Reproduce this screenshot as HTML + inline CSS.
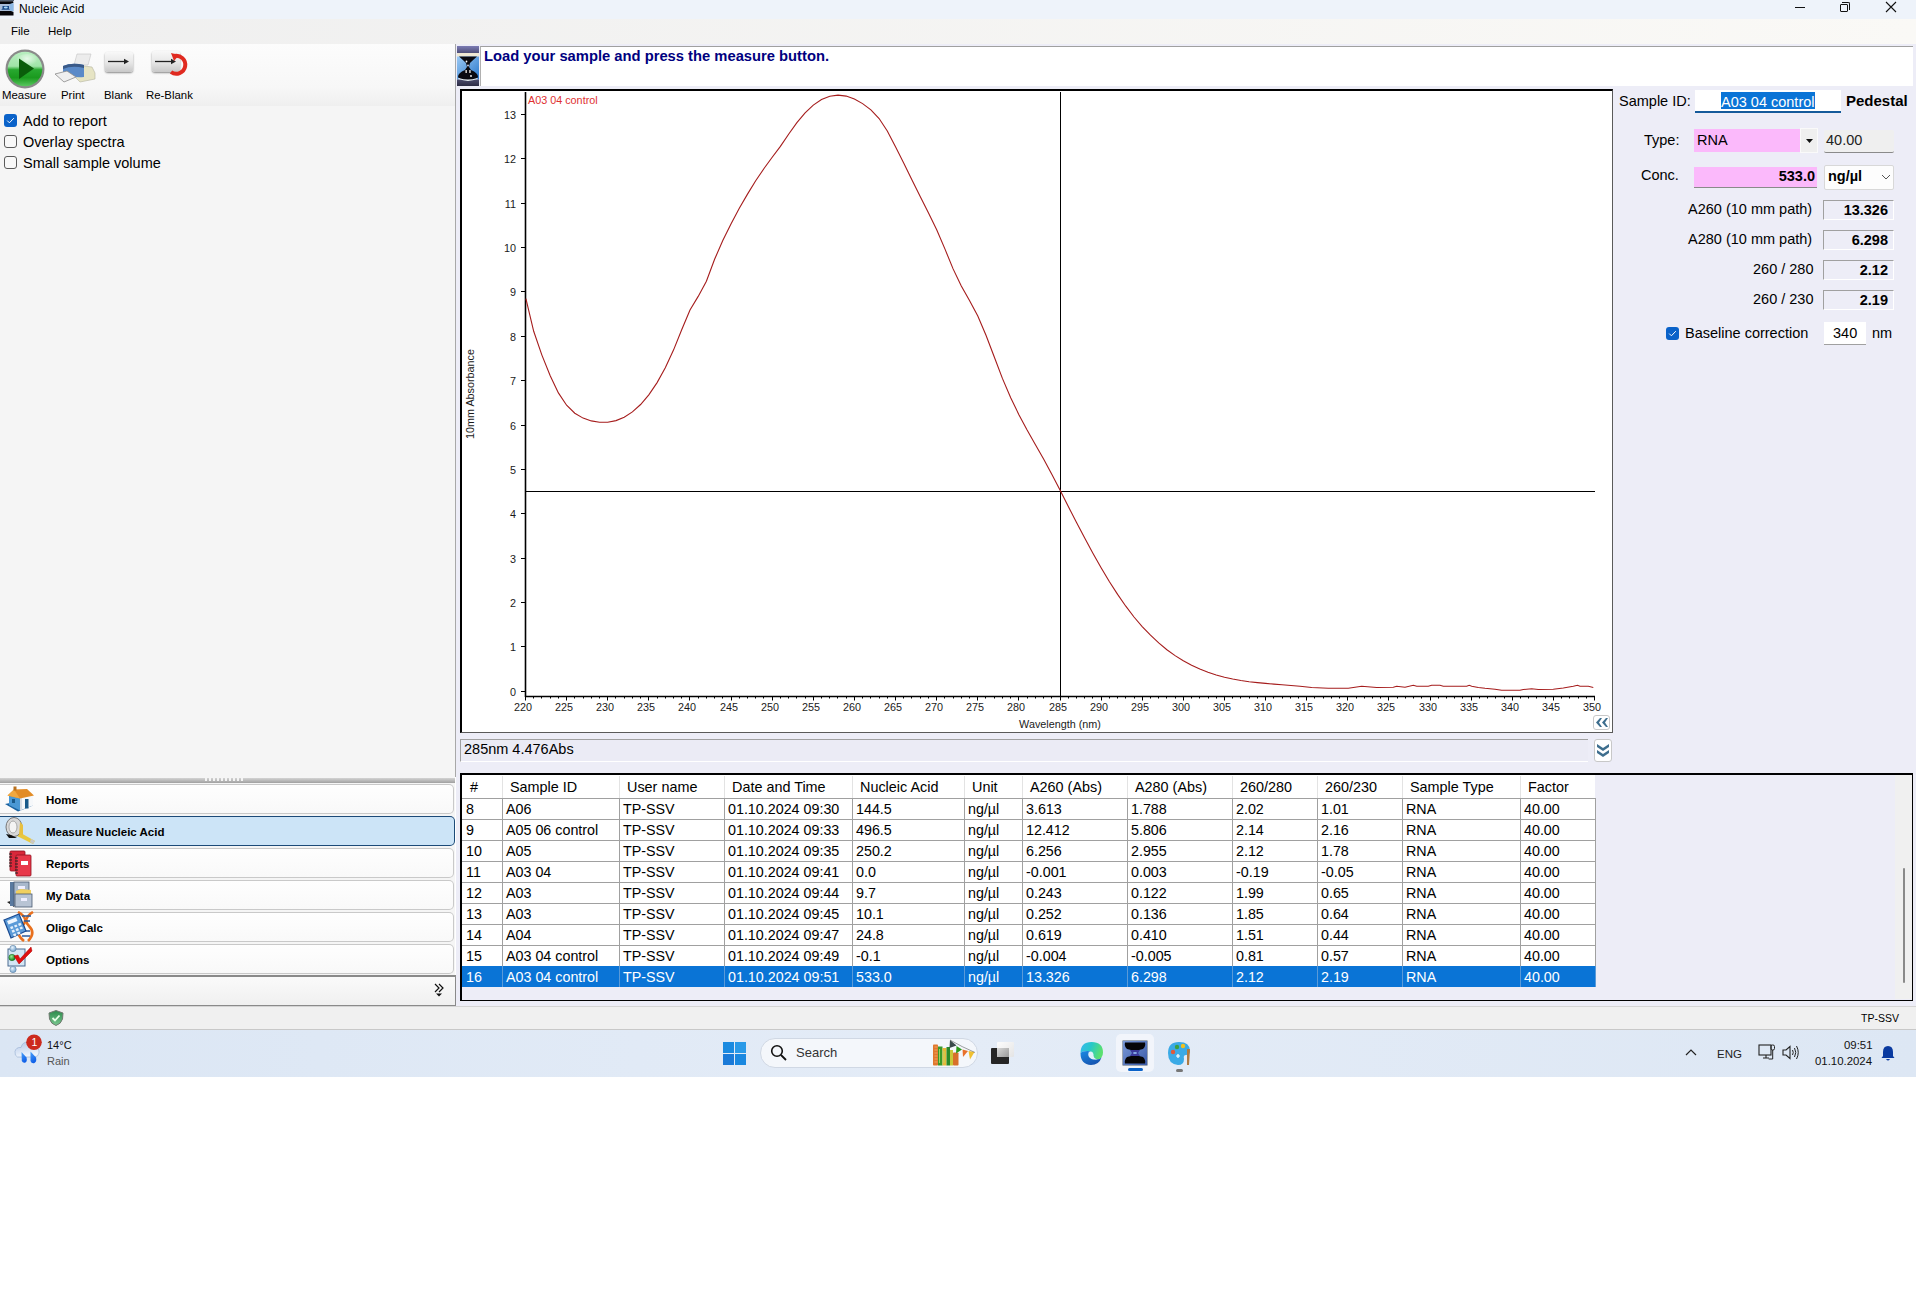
<!DOCTYPE html>
<html><head><meta charset="utf-8"><title>Nucleic Acid</title>
<style>
html,body{margin:0;padding:0;background:#fff;}
body{width:1920px;height:1312px;position:relative;overflow:hidden;font-family:"Liberation Sans",sans-serif;color:#000;}
.a{position:absolute;}
.t{position:absolute;white-space:nowrap;line-height:1;}
.ct{font-family:"Liberation Sans",sans-serif;font-size:10.8px;fill:#1a1a1a;}
.th{position:absolute;white-space:nowrap;font-size:14.4px;line-height:17px;color:#000;}
.td{position:absolute;white-space:nowrap;font-size:14.3px;line-height:17px;color:#000;}
.tds{color:#fff;}
.trow{position:absolute;left:462px;width:1133px;height:21px;background:#fff;}
.trow.sel{background:#0a74d6;}
.thead{position:absolute;background:#fff;}
.navi{position:absolute;left:0;width:454px;height:30px;border:1px solid #c9c9c9;border-left:none;border-radius:0 5px 5px 0;background:linear-gradient(#fefefe,#f9f9f9);box-sizing:border-box;}
.navt{position:absolute;left:46px;font-weight:bold;font-size:11.5px;line-height:14px;white-space:nowrap;}
.cb{position:absolute;width:13px;height:13px;box-sizing:border-box;border-radius:3px;}
.cbon{background:#0a62c9;}
.cboff{border:1px solid #5a5a5a;background:#f8f8f8;}
.vbox{position:absolute;left:1823px;width:71px;height:20px;box-sizing:border-box;border-top:1px solid #a0a0a0;border-left:1px solid #a0a0a0;border-bottom:1px solid #fff;border-right:1px solid #fff;}
.vt{position:absolute;right:5px;top:1px;font-weight:bold;font-size:14.5px;line-height:17px;}
.lbl{position:absolute;white-space:nowrap;font-size:14.5px;line-height:17px;}
</style></head><body>

<!-- Title bar -->
<div class="a" style="left:0;top:0;width:1916px;height:19px;background:#eef3fa"></div>
<svg class="a" style="left:0;top:0" width="15" height="17" viewBox="0 0 15 17">
 <rect x="0" y="0" width="14" height="1.2" fill="#556070"/>
 <path d="M0,1.2 L13,1.2 L13.5,3 L11,4 L0,4 Z" fill="#05050a"/>
 <rect x="0" y="4" width="13.5" height="7" fill="#a8bcd8"/>
 <path d="M9.5,4 L13.5,3 L13.5,11.5 L10,11 Z" fill="#8cb8e4"/>
 <path d="M2.5,6 L9,6 L9,8.5 L10,9.8 L1.2,9.8 L2.5,8.5 Z" fill="#1a4a88"/>
 <ellipse cx="5.8" cy="7.6" rx="2" ry="1" fill="#a8d8fc"/>
 <path d="M0,11 L11,11 L13.5,12 L13.5,15.5 L0,15.5 Z" fill="#05050a"/>
</svg>
<div class="t" style="left:19px;top:3px;font-size:12px">Nucleic Acid</div>
<div class="a" style="left:1795px;top:7px;width:10px;height:1px;background:#111"></div>
<div class="a" style="left:1840px;top:4px;width:8px;height:8px;border:1px solid #111;border-radius:1px;box-sizing:border-box"></div>
<div class="a" style="left:1842px;top:2px;width:8px;height:8px;border-top:1px solid #111;border-right:1px solid #111;border-radius:0 2px 0 0;box-sizing:border-box"></div>
<svg class="a" style="left:1885px;top:1px" width="12" height="12" viewBox="0 0 12 12"><path d="M1,1 L11,11 M11,1 L1,11" stroke="#111" stroke-width="1.1"/></svg>

<!-- Menu bar -->
<div class="a" style="left:0;top:19px;width:1916px;height:25px;background:linear-gradient(to right,#efefef,#faf9f6)"></div>
<div class="t" style="left:11px;top:26px;font-size:11.5px">File</div>
<div class="t" style="left:48px;top:26px;font-size:11.5px">Help</div>

<!-- Left panel -->
<div class="a" style="left:0;top:44px;width:455px;height:962px;background:#f5f5f5"></div>
<div class="a" style="left:0;top:44px;width:455px;height:62px;background:linear-gradient(#fcfcfc,#f7f7f7 70%,#efefef)"></div>
<div class="a" style="left:455px;top:44px;width:1px;height:733px;background:#a8a8a8"></div>

<!-- Toolbar icons -->
<svg class="a" style="left:4px;top:48px" width="42" height="42" viewBox="0 0 42 42">
 <defs>
  <linearGradient id="gg" x1="0" y1="0" x2="0" y2="1"><stop offset="0" stop-color="#b8eec0"/><stop offset="0.42" stop-color="#a0e4a8"/><stop offset="0.52" stop-color="#28a830"/><stop offset="0.75" stop-color="#1a9a1e"/><stop offset="1" stop-color="#5ac860"/></linearGradient>
  <radialGradient id="gh" cx="50%" cy="30%" r="45%"><stop offset="0" stop-color="#ffffff" stop-opacity="0.7"/><stop offset="1" stop-color="#ffffff" stop-opacity="0"/></radialGradient>
 </defs>
 <circle cx="21" cy="21" r="19.5" fill="#8a8a8a"/>
 <circle cx="21" cy="21" r="17.3" fill="url(#gg)"/>
 <ellipse cx="23" cy="14" rx="12" ry="8" fill="url(#gh)"/>
 <path d="M15,10.5 L30,20.5 L15,31 Z" fill="#0a5c0a"/>
</svg>
<svg class="a" style="left:54px;top:53px" width="42" height="32" viewBox="0 0 42 32">
 <path d="M23,1 L37,1 L34,12 L20,12 Z" fill="#ececec" stroke="#c4c4c4" stroke-width="0.6"/>
 <path d="M22,12 L38,14 L41,20 L41,26 L26,29 L22,25 Z" fill="#e6e4c4" stroke="#b4b4a0" stroke-width="0.6"/>
 <path d="M9,13 Q18,9 30,12 L30,24 Q20,25 9,22 Z" fill="#5a8ac8"/>
 <path d="M9,13 Q18,9 30,12 L30,15 Q18,12 9,16 Z" fill="#3a5a88"/>
 <path d="M1,21 L13,18 L22,24 L10,29 Z" fill="#efefef" stroke="#8a8a8a" stroke-width="0.8"/>
</svg>
<div class="a" style="left:105px;top:52px;width:28px;height:20px;border-radius:3px;background:linear-gradient(#f8f8f8,#e6e6e6 55%,#c8c8c8);box-shadow:0 1px 2px #888"></div>
<svg class="a" style="left:108px;top:58px" width="22" height="7" viewBox="0 0 22 7"><path d="M0,3.5 L18,3.5" stroke="#222" stroke-width="1.3"/><path d="M16,0.8 L21,3.5 L16,6.2 Z" fill="#222"/></svg>
<div class="a" style="left:152px;top:51px;width:28px;height:21px;border-radius:3px;background:linear-gradient(#f8f8f8,#e6e6e6 55%,#c8c8c8);box-shadow:0 1px 2px #888"></div>
<svg class="a" style="left:155px;top:58px" width="22" height="7" viewBox="0 0 22 7"><path d="M0,3.5 L18,3.5" stroke="#222" stroke-width="1.3"/><path d="M16,0.8 L21,3.5 L16,6.2 Z" fill="#222"/></svg>
<svg class="a" style="left:166px;top:52px" width="26" height="26" viewBox="0 0 26 26"><path d="M8,4 A9,9 0 1 1 5,20" fill="none" stroke="#e02a20" stroke-width="4"/><path d="M5,1 L13,3 L8,9 Z" fill="#e02a20"/></svg>
<div class="t" style="left:2px;top:90px;font-size:11.4px">Measure</div>
<div class="t" style="left:61px;top:90px;font-size:11.4px">Print</div>
<div class="t" style="left:104px;top:90px;font-size:11.4px">Blank</div>
<div class="t" style="left:146px;top:90px;font-size:11.4px">Re-Blank</div>

<!-- Checkboxes -->
<div class="cb cbon" style="left:4px;top:114px"></div>
<svg class="a" style="left:4px;top:114px" width="13" height="13" viewBox="0 0 13 13"><path d="M3.2,6.6 L5.4,8.8 L9.8,4.2" fill="none" stroke="#fff" stroke-width="1"/></svg>
<div class="lbl" style="left:23px;top:113px">Add to report</div>
<div class="cb cboff" style="left:4px;top:135px"></div>
<div class="lbl" style="left:23px;top:134px">Overlay spectra</div>
<div class="cb cboff" style="left:4px;top:156px"></div>
<div class="lbl" style="left:23px;top:155px">Small sample volume</div>

<!-- Splitter -->
<div class="a" style="left:0;top:778px;width:455px;height:5px;background:linear-gradient(#d4d4d4,#a0a0a0)"></div>
<div class="a" style="left:205px;top:778px;width:40px;height:3px;background:repeating-linear-gradient(to right,#f4f4f4 0 2px,transparent 2px 4px)"></div>

<!-- Nav items -->
<div class="navi" style="top:784px"></div>
<div class="navi" style="top:816px;width:455px;background:#cce4f7;border:1px solid #1c4a78;border-left:none"></div>
<div class="navi" style="top:848px"></div>
<div class="navi" style="top:880px"></div>
<div class="navi" style="top:912px"></div>
<div class="navi" style="top:944px"></div>
<div class="navt" style="top:793px">Home</div>
<div class="navt" style="top:825px">Measure Nucleic Acid</div>
<div class="navt" style="top:857px">Reports</div>
<div class="navt" style="top:889px">My Data</div>
<div class="navt" style="top:921px">Oligo Calc</div>
<div class="navt" style="top:953px">Options</div>

<!-- Home icon -->
<svg class="a" style="left:0px;top:786px" width="36" height="28" viewBox="0 0 36 28">
 <path d="M5,18 L18,25.5 L33,19.5 L20,15 Z" fill="#1a62a0"/>
 <path d="M9,10 L14.5,5 L20,11 L20,24.5 L9,19 Z" fill="#4a98d4"/>
 <path d="M20,11 L33,9 L33,19.5 L20,24.5 Z" fill="#f6f8fa"/>
 <path d="M20,11 L22,10.7 L22,23.7 L20,24.5 Z" fill="#d8dde4"/>
 <path d="M7.5,9.5 L14,3.5 L27,3 L34,9.5 L20,12.5 Z" fill="#e28c26"/>
 <path d="M14,3.5 L20,12.5 L7.5,9.5 Z" fill="#f0a840"/>
 <rect x="13.5" y="0.5" width="3" height="4" fill="#b8701e"/>
 <rect x="25" y="13" width="3.5" height="9.5" fill="#1a5a8a"/>
 <rect x="12" y="13" width="3" height="4" fill="#1a5a8a"/>
</svg>
<!-- Measure icon -->
<svg class="a" style="left:5px;top:817px" width="30" height="28" viewBox="0 0 30 28">
 <path d="M14,15 L30,24 L28,27 L12,19 Z" fill="#e8c840"/>
 <path d="M26,22 L30,24 L28,27 L25,25 Z" fill="#c8c8c8"/>
 <ellipse cx="9" cy="10" rx="8" ry="9.5" fill="#d8d8d8" stroke="#777" stroke-width="1"/>
 <ellipse cx="8" cy="10" rx="4" ry="6" fill="#f4f4f4" stroke="#999" stroke-width="0.8"/>
 <path d="M15,5 L18,8 L18,18 L14,18 Z" fill="#e8c040"/>
 <path d="M1,17 L4,21 L12,21 L6,18 Z" fill="#111"/>
</svg>
<!-- Reports icon -->
<svg class="a" style="left:8px;top:850px" width="26" height="27" viewBox="0 0 26 27">
 <rect x="2" y="1" width="15" height="20" rx="1" fill="#d8283a" stroke="#901020" stroke-width="0.8"/>
 <rect x="8" y="5" width="15" height="21" rx="1" fill="#e8384a" stroke="#901020" stroke-width="0.8"/>
 <rect x="13" y="11" width="7" height="4" fill="#fff"/>
 <path d="M1,4 h3 M1,7 h3 M1,10 h3 M1,13 h3 M1,16 h3 M7,8 h3 M7,11 h3 M7,14 h3 M7,17 h3 M7,20 h3 M7,23 h3" stroke="#222" stroke-width="1"/>
</svg>
<!-- My Data icon -->
<svg class="a" style="left:7px;top:881px" width="27" height="27" viewBox="0 0 27 27">
 <path d="M0,21 L7,26 L7,19 Z" fill="#222"/>
 <rect x="3" y="1" width="4" height="24" fill="#5a7aa0"/>
 <rect x="7" y="1" width="15" height="24" fill="#a8b8cc" stroke="#4a5a70" stroke-width="0.8"/>
 <rect x="11" y="5" width="7" height="3" fill="#eef" />
 <path d="M9,10 L14,8 L24,9 L24,13 L9,13 Z" fill="#f0d060"/>
 <rect x="8" y="13" width="17" height="13" fill="#b8c4d4" stroke="#4a5a70" stroke-width="0.8"/>
 <rect x="14" y="17" width="6" height="3" fill="#eef"/>
</svg>
<!-- Oligo Calc icon -->
<svg class="a" style="left:0px;top:911px" width="36" height="31" viewBox="0 0 36 31">
 <path d="M18,1 Q30,8 22,15 Q14,22 24,30" fill="none" stroke="#e8701e" stroke-width="2.6"/>
 <path d="M33,1 Q22,8 29,15 Q36,22 28,30" fill="none" stroke="#e8701e" stroke-width="2.6"/>
 <path d="M22,5 h9 M24,10 h6 M24,20 h6 M22,25 h8" stroke="#2a5a9a" stroke-width="1.5"/>
 <path d="M4,9 L19,3 L26,20 L11,27 Z" fill="#5a9ad8" stroke="#1a4a90" stroke-width="1.2"/>
 <path d="M7,10 L16,6.5 L17.5,10 L8.5,13.5 Z" fill="#eef6ff"/>
 <path d="M10,16 l2.5,-1 l1,2.2 l-2.5,1 Z M14,14.4 l2.5,-1 l1,2.2 l-2.5,1 Z M18,12.8 l2.5,-1 l1,2.2 l-2.5,1 Z M11.5,19.6 l2.5,-1 l1,2.2 l-2.5,1 Z M15.5,18 l2.5,-1 l1,2.2 l-2.5,1 Z M19.5,16.4 l2.5,-1 l1,2.2 l-2.5,1 Z M13,23.2 l2.5,-1 l1,2.2 l-2.5,1 Z M17,21.6 l2.5,-1 l1,2.2 l-2.5,1 Z" fill="#e4f0fc"/>
</svg>
<!-- Options icon -->
<svg class="a" style="left:6px;top:945px" width="30" height="28" viewBox="0 0 30 28">
 <defs><radialGradient id="ob" cx="40%" cy="35%" r="60%"><stop offset="0" stop-color="#eaf4fc"/><stop offset="1" stop-color="#7aa8d0"/></radialGradient>
 <radialGradient id="og" cx="40%" cy="35%" r="60%"><stop offset="0" stop-color="#9ae89a"/><stop offset="1" stop-color="#1a8a20"/></radialGradient></defs>
 <rect x="2" y="4" width="17" height="17" fill="#d4e6f4" stroke="#4a6a90" stroke-width="1"/>
 <circle cx="7" cy="3.5" r="3.2" fill="url(#ob)" stroke="#5a7a9a" stroke-width="0.5"/>
 <circle cx="6" cy="12.5" r="3.2" fill="url(#og)" stroke="#1a6a20" stroke-width="0.5"/>
 <circle cx="7" cy="24.5" r="3.2" fill="url(#ob)" stroke="#5a7a9a" stroke-width="0.5"/>
 <path d="M8,11 L12,10 L14,14 L25,2 L26,6 L13,19 Z" fill="#e01010" stroke="#a00" stroke-width="0.5"/>
</svg>
<div class="a" style="left:0;top:975px;width:456px;height:31px;box-sizing:border-box;border-top:2px solid #8a8a8a;border-right:1px solid #8a8a8a;border-bottom:1px solid #8a8a8a;background:linear-gradient(#fafafa,#f0f0f0)"></div>
<svg class="a" style="left:434px;top:983px" width="12" height="14" viewBox="0 0 12 14"><path d="M1,1 L5,5 L1,9 M5,1 L9,5 L5,9" fill="none" stroke="#111" stroke-width="1.2"/><path d="M2,10.5 L8,10.5 L5,13.5 Z" fill="#111"/></svg>

<!-- Right main area -->
<div class="a" style="left:456px;top:44px;width:1460px;height:962px;background:#ededf7"></div>
<!-- header -->
<svg class="a" style="left:457px;top:46px" width="22" height="40" viewBox="0 0 22 40">
 <defs>
  <linearGradient id="hb1" x1="0" y1="0" x2="0" y2="1"><stop offset="0" stop-color="#7c7cb4"/><stop offset="1" stop-color="#4e4e78"/></linearGradient>
  <linearGradient id="hb2" x1="0" y1="0" x2="0" y2="1"><stop offset="0" stop-color="#4a4a6c"/><stop offset="1" stop-color="#2c2c44"/></linearGradient>
  <linearGradient id="hbl" x1="0" y1="0" x2="1" y2="1"><stop offset="0" stop-color="#9ccaf4"/><stop offset="1" stop-color="#2a78cc"/></linearGradient>
 </defs>
 <rect x="0" y="0" width="22" height="7" fill="url(#hb1)"/>
 <rect x="0" y="7" width="22" height="3.5" fill="#eee8d4"/>
 <rect x="0" y="10.5" width="22" height="23" fill="url(#hbl)"/>
 <rect x="0" y="33.5" width="22" height="6.5" fill="url(#hb2)"/>
 <path d="M2,10.5 L20,10.5 Q16,14 13,17 L12,21 L14,24 Q21,27 21,31 Q20,34 11,34.5 Q2,34 1,31 Q1,27 8,24 L10,21 L9,17 Q6,14 2,10.5 Z" fill="#0a0a10"/>
 <path d="M1.5,32.5 Q11,36 20.5,32.5" fill="none" stroke="#e8f0f4" stroke-width="1.3"/>
 <circle cx="9.5" cy="15.5" r="0.9" fill="#fff"/><circle cx="11" cy="19.5" r="1" fill="#ccd"/>
 <rect x="8.5" y="24" width="1.3" height="3" fill="#f4f0e8"/><rect x="12.3" y="24" width="1.3" height="3" fill="#f4f0e8"/>
 <circle cx="14" cy="30" r="0.9" fill="#fff"/>
</svg>
<div class="a" style="left:480px;top:46px;width:1433px;height:40px;background:#fff;border-top:1px solid #a0a0a0;border-left:1px solid #b0b0b0;box-sizing:border-box"></div>
<div class="t" style="left:484px;top:49px;font-size:14.75px;font-weight:bold;color:#000080">Load your sample and press the measure button.</div>

<!-- chart frame -->
<div class="a" style="left:460px;top:89px;width:1153px;height:644px;background:#fff;box-sizing:border-box;border-top:2px solid #000;border-left:2px solid #000;border-right:1px solid #5a5a5a;border-bottom:1px solid #5a5a5a"></div>
<svg style="position:absolute;left:462px;top:91px" width="1150" height="641" viewBox="462 91 1150 641">
<line x1="525.5" y1="92" x2="525.5" y2="697" stroke="#000" stroke-width="1.6"/>
<line x1="525" y1="696.5" x2="1595" y2="696.5" stroke="#000" stroke-width="1.6"/>
<line x1="521" y1="691.5" x2="525" y2="691.5" stroke="#000" stroke-width="1"/>
<text x="516" y="695.5" text-anchor="end" class="ct">0</text>
<line x1="521" y1="646.5" x2="525" y2="646.5" stroke="#000" stroke-width="1"/>
<text x="516" y="650.5" text-anchor="end" class="ct">1</text>
<line x1="521" y1="602.5" x2="525" y2="602.5" stroke="#000" stroke-width="1"/>
<text x="516" y="606.5" text-anchor="end" class="ct">2</text>
<line x1="521" y1="558.5" x2="525" y2="558.5" stroke="#000" stroke-width="1"/>
<text x="516" y="562.5" text-anchor="end" class="ct">3</text>
<line x1="521" y1="513.5" x2="525" y2="513.5" stroke="#000" stroke-width="1"/>
<text x="516" y="517.5" text-anchor="end" class="ct">4</text>
<line x1="521" y1="469.5" x2="525" y2="469.5" stroke="#000" stroke-width="1"/>
<text x="516" y="473.5" text-anchor="end" class="ct">5</text>
<line x1="521" y1="425.5" x2="525" y2="425.5" stroke="#000" stroke-width="1"/>
<text x="516" y="429.5" text-anchor="end" class="ct">6</text>
<line x1="521" y1="380.5" x2="525" y2="380.5" stroke="#000" stroke-width="1"/>
<text x="516" y="384.5" text-anchor="end" class="ct">7</text>
<line x1="521" y1="336.5" x2="525" y2="336.5" stroke="#000" stroke-width="1"/>
<text x="516" y="340.5" text-anchor="end" class="ct">8</text>
<line x1="521" y1="291.5" x2="525" y2="291.5" stroke="#000" stroke-width="1"/>
<text x="516" y="295.5" text-anchor="end" class="ct">9</text>
<line x1="521" y1="247.5" x2="525" y2="247.5" stroke="#000" stroke-width="1"/>
<text x="516" y="251.5" text-anchor="end" class="ct">10</text>
<line x1="521" y1="203.5" x2="525" y2="203.5" stroke="#000" stroke-width="1"/>
<text x="516" y="207.5" text-anchor="end" class="ct">11</text>
<line x1="521" y1="158.5" x2="525" y2="158.5" stroke="#000" stroke-width="1"/>
<text x="516" y="162.5" text-anchor="end" class="ct">12</text>
<line x1="521" y1="114.5" x2="525" y2="114.5" stroke="#000" stroke-width="1"/>
<text x="516" y="118.5" text-anchor="end" class="ct">13</text>
<line x1="525.5" y1="696" x2="525.5" y2="700.5" stroke="#000" stroke-width="1"/>
<text x="523.0" y="711" text-anchor="middle" class="ct">220</text>
<line x1="533.5" y1="696" x2="533.5" y2="698.5" stroke="#000" stroke-width="1"/>
<line x1="541.5" y1="696" x2="541.5" y2="698.5" stroke="#000" stroke-width="1"/>
<line x1="550.5" y1="696" x2="550.5" y2="698.5" stroke="#000" stroke-width="1"/>
<line x1="558.5" y1="696" x2="558.5" y2="698.5" stroke="#000" stroke-width="1"/>
<line x1="566.5" y1="696" x2="566.5" y2="700.5" stroke="#000" stroke-width="1"/>
<text x="564.0" y="711" text-anchor="middle" class="ct">225</text>
<line x1="574.5" y1="696" x2="574.5" y2="698.5" stroke="#000" stroke-width="1"/>
<line x1="583.5" y1="696" x2="583.5" y2="698.5" stroke="#000" stroke-width="1"/>
<line x1="591.5" y1="696" x2="591.5" y2="698.5" stroke="#000" stroke-width="1"/>
<line x1="599.5" y1="696" x2="599.5" y2="698.5" stroke="#000" stroke-width="1"/>
<line x1="607.5" y1="696" x2="607.5" y2="700.5" stroke="#000" stroke-width="1"/>
<text x="605.0" y="711" text-anchor="middle" class="ct">230</text>
<line x1="615.5" y1="696" x2="615.5" y2="698.5" stroke="#000" stroke-width="1"/>
<line x1="624.5" y1="696" x2="624.5" y2="698.5" stroke="#000" stroke-width="1"/>
<line x1="632.5" y1="696" x2="632.5" y2="698.5" stroke="#000" stroke-width="1"/>
<line x1="640.5" y1="696" x2="640.5" y2="698.5" stroke="#000" stroke-width="1"/>
<line x1="648.5" y1="696" x2="648.5" y2="700.5" stroke="#000" stroke-width="1"/>
<text x="646.0" y="711" text-anchor="middle" class="ct">235</text>
<line x1="657.5" y1="696" x2="657.5" y2="698.5" stroke="#000" stroke-width="1"/>
<line x1="665.5" y1="696" x2="665.5" y2="698.5" stroke="#000" stroke-width="1"/>
<line x1="673.5" y1="696" x2="673.5" y2="698.5" stroke="#000" stroke-width="1"/>
<line x1="681.5" y1="696" x2="681.5" y2="698.5" stroke="#000" stroke-width="1"/>
<line x1="689.5" y1="696" x2="689.5" y2="700.5" stroke="#000" stroke-width="1"/>
<text x="687.0" y="711" text-anchor="middle" class="ct">240</text>
<line x1="698.5" y1="696" x2="698.5" y2="698.5" stroke="#000" stroke-width="1"/>
<line x1="706.5" y1="696" x2="706.5" y2="698.5" stroke="#000" stroke-width="1"/>
<line x1="714.5" y1="696" x2="714.5" y2="698.5" stroke="#000" stroke-width="1"/>
<line x1="722.5" y1="696" x2="722.5" y2="698.5" stroke="#000" stroke-width="1"/>
<line x1="731.5" y1="696" x2="731.5" y2="700.5" stroke="#000" stroke-width="1"/>
<text x="729.0" y="711" text-anchor="middle" class="ct">245</text>
<line x1="739.5" y1="696" x2="739.5" y2="698.5" stroke="#000" stroke-width="1"/>
<line x1="747.5" y1="696" x2="747.5" y2="698.5" stroke="#000" stroke-width="1"/>
<line x1="755.5" y1="696" x2="755.5" y2="698.5" stroke="#000" stroke-width="1"/>
<line x1="763.5" y1="696" x2="763.5" y2="698.5" stroke="#000" stroke-width="1"/>
<line x1="772.5" y1="696" x2="772.5" y2="700.5" stroke="#000" stroke-width="1"/>
<text x="770.0" y="711" text-anchor="middle" class="ct">250</text>
<line x1="780.5" y1="696" x2="780.5" y2="698.5" stroke="#000" stroke-width="1"/>
<line x1="788.5" y1="696" x2="788.5" y2="698.5" stroke="#000" stroke-width="1"/>
<line x1="796.5" y1="696" x2="796.5" y2="698.5" stroke="#000" stroke-width="1"/>
<line x1="805.5" y1="696" x2="805.5" y2="698.5" stroke="#000" stroke-width="1"/>
<line x1="813.5" y1="696" x2="813.5" y2="700.5" stroke="#000" stroke-width="1"/>
<text x="811.0" y="711" text-anchor="middle" class="ct">255</text>
<line x1="821.5" y1="696" x2="821.5" y2="698.5" stroke="#000" stroke-width="1"/>
<line x1="829.5" y1="696" x2="829.5" y2="698.5" stroke="#000" stroke-width="1"/>
<line x1="837.5" y1="696" x2="837.5" y2="698.5" stroke="#000" stroke-width="1"/>
<line x1="846.5" y1="696" x2="846.5" y2="698.5" stroke="#000" stroke-width="1"/>
<line x1="854.5" y1="696" x2="854.5" y2="700.5" stroke="#000" stroke-width="1"/>
<text x="852.0" y="711" text-anchor="middle" class="ct">260</text>
<line x1="862.5" y1="696" x2="862.5" y2="698.5" stroke="#000" stroke-width="1"/>
<line x1="870.5" y1="696" x2="870.5" y2="698.5" stroke="#000" stroke-width="1"/>
<line x1="879.5" y1="696" x2="879.5" y2="698.5" stroke="#000" stroke-width="1"/>
<line x1="887.5" y1="696" x2="887.5" y2="698.5" stroke="#000" stroke-width="1"/>
<line x1="895.5" y1="696" x2="895.5" y2="700.5" stroke="#000" stroke-width="1"/>
<text x="893.0" y="711" text-anchor="middle" class="ct">265</text>
<line x1="903.5" y1="696" x2="903.5" y2="698.5" stroke="#000" stroke-width="1"/>
<line x1="911.5" y1="696" x2="911.5" y2="698.5" stroke="#000" stroke-width="1"/>
<line x1="920.5" y1="696" x2="920.5" y2="698.5" stroke="#000" stroke-width="1"/>
<line x1="928.5" y1="696" x2="928.5" y2="698.5" stroke="#000" stroke-width="1"/>
<line x1="936.5" y1="696" x2="936.5" y2="700.5" stroke="#000" stroke-width="1"/>
<text x="934.0" y="711" text-anchor="middle" class="ct">270</text>
<line x1="944.5" y1="696" x2="944.5" y2="698.5" stroke="#000" stroke-width="1"/>
<line x1="953.5" y1="696" x2="953.5" y2="698.5" stroke="#000" stroke-width="1"/>
<line x1="961.5" y1="696" x2="961.5" y2="698.5" stroke="#000" stroke-width="1"/>
<line x1="969.5" y1="696" x2="969.5" y2="698.5" stroke="#000" stroke-width="1"/>
<line x1="977.5" y1="696" x2="977.5" y2="700.5" stroke="#000" stroke-width="1"/>
<text x="975.0" y="711" text-anchor="middle" class="ct">275</text>
<line x1="985.5" y1="696" x2="985.5" y2="698.5" stroke="#000" stroke-width="1"/>
<line x1="994.5" y1="696" x2="994.5" y2="698.5" stroke="#000" stroke-width="1"/>
<line x1="1002.5" y1="696" x2="1002.5" y2="698.5" stroke="#000" stroke-width="1"/>
<line x1="1010.5" y1="696" x2="1010.5" y2="698.5" stroke="#000" stroke-width="1"/>
<line x1="1018.5" y1="696" x2="1018.5" y2="700.5" stroke="#000" stroke-width="1"/>
<text x="1016.0" y="711" text-anchor="middle" class="ct">280</text>
<line x1="1027.5" y1="696" x2="1027.5" y2="698.5" stroke="#000" stroke-width="1"/>
<line x1="1035.5" y1="696" x2="1035.5" y2="698.5" stroke="#000" stroke-width="1"/>
<line x1="1043.5" y1="696" x2="1043.5" y2="698.5" stroke="#000" stroke-width="1"/>
<line x1="1051.5" y1="696" x2="1051.5" y2="698.5" stroke="#000" stroke-width="1"/>
<line x1="1060.5" y1="696" x2="1060.5" y2="700.5" stroke="#000" stroke-width="1"/>
<text x="1058.0" y="711" text-anchor="middle" class="ct">285</text>
<line x1="1068.5" y1="696" x2="1068.5" y2="698.5" stroke="#000" stroke-width="1"/>
<line x1="1076.5" y1="696" x2="1076.5" y2="698.5" stroke="#000" stroke-width="1"/>
<line x1="1084.5" y1="696" x2="1084.5" y2="698.5" stroke="#000" stroke-width="1"/>
<line x1="1092.5" y1="696" x2="1092.5" y2="698.5" stroke="#000" stroke-width="1"/>
<line x1="1101.5" y1="696" x2="1101.5" y2="700.5" stroke="#000" stroke-width="1"/>
<text x="1099.0" y="711" text-anchor="middle" class="ct">290</text>
<line x1="1109.5" y1="696" x2="1109.5" y2="698.5" stroke="#000" stroke-width="1"/>
<line x1="1117.5" y1="696" x2="1117.5" y2="698.5" stroke="#000" stroke-width="1"/>
<line x1="1125.5" y1="696" x2="1125.5" y2="698.5" stroke="#000" stroke-width="1"/>
<line x1="1134.5" y1="696" x2="1134.5" y2="698.5" stroke="#000" stroke-width="1"/>
<line x1="1142.5" y1="696" x2="1142.5" y2="700.5" stroke="#000" stroke-width="1"/>
<text x="1140.0" y="711" text-anchor="middle" class="ct">295</text>
<line x1="1150.5" y1="696" x2="1150.5" y2="698.5" stroke="#000" stroke-width="1"/>
<line x1="1158.5" y1="696" x2="1158.5" y2="698.5" stroke="#000" stroke-width="1"/>
<line x1="1166.5" y1="696" x2="1166.5" y2="698.5" stroke="#000" stroke-width="1"/>
<line x1="1175.5" y1="696" x2="1175.5" y2="698.5" stroke="#000" stroke-width="1"/>
<line x1="1183.5" y1="696" x2="1183.5" y2="700.5" stroke="#000" stroke-width="1"/>
<text x="1181.0" y="711" text-anchor="middle" class="ct">300</text>
<line x1="1191.5" y1="696" x2="1191.5" y2="698.5" stroke="#000" stroke-width="1"/>
<line x1="1199.5" y1="696" x2="1199.5" y2="698.5" stroke="#000" stroke-width="1"/>
<line x1="1208.5" y1="696" x2="1208.5" y2="698.5" stroke="#000" stroke-width="1"/>
<line x1="1216.5" y1="696" x2="1216.5" y2="698.5" stroke="#000" stroke-width="1"/>
<line x1="1224.5" y1="696" x2="1224.5" y2="700.5" stroke="#000" stroke-width="1"/>
<text x="1222.0" y="711" text-anchor="middle" class="ct">305</text>
<line x1="1232.5" y1="696" x2="1232.5" y2="698.5" stroke="#000" stroke-width="1"/>
<line x1="1240.5" y1="696" x2="1240.5" y2="698.5" stroke="#000" stroke-width="1"/>
<line x1="1249.5" y1="696" x2="1249.5" y2="698.5" stroke="#000" stroke-width="1"/>
<line x1="1257.5" y1="696" x2="1257.5" y2="698.5" stroke="#000" stroke-width="1"/>
<line x1="1265.5" y1="696" x2="1265.5" y2="700.5" stroke="#000" stroke-width="1"/>
<text x="1263.0" y="711" text-anchor="middle" class="ct">310</text>
<line x1="1273.5" y1="696" x2="1273.5" y2="698.5" stroke="#000" stroke-width="1"/>
<line x1="1282.5" y1="696" x2="1282.5" y2="698.5" stroke="#000" stroke-width="1"/>
<line x1="1290.5" y1="696" x2="1290.5" y2="698.5" stroke="#000" stroke-width="1"/>
<line x1="1298.5" y1="696" x2="1298.5" y2="698.5" stroke="#000" stroke-width="1"/>
<line x1="1306.5" y1="696" x2="1306.5" y2="700.5" stroke="#000" stroke-width="1"/>
<text x="1304.0" y="711" text-anchor="middle" class="ct">315</text>
<line x1="1314.5" y1="696" x2="1314.5" y2="698.5" stroke="#000" stroke-width="1"/>
<line x1="1323.5" y1="696" x2="1323.5" y2="698.5" stroke="#000" stroke-width="1"/>
<line x1="1331.5" y1="696" x2="1331.5" y2="698.5" stroke="#000" stroke-width="1"/>
<line x1="1339.5" y1="696" x2="1339.5" y2="698.5" stroke="#000" stroke-width="1"/>
<line x1="1347.5" y1="696" x2="1347.5" y2="700.5" stroke="#000" stroke-width="1"/>
<text x="1345.0" y="711" text-anchor="middle" class="ct">320</text>
<line x1="1356.5" y1="696" x2="1356.5" y2="698.5" stroke="#000" stroke-width="1"/>
<line x1="1364.5" y1="696" x2="1364.5" y2="698.5" stroke="#000" stroke-width="1"/>
<line x1="1372.5" y1="696" x2="1372.5" y2="698.5" stroke="#000" stroke-width="1"/>
<line x1="1380.5" y1="696" x2="1380.5" y2="698.5" stroke="#000" stroke-width="1"/>
<line x1="1388.5" y1="696" x2="1388.5" y2="700.5" stroke="#000" stroke-width="1"/>
<text x="1386.0" y="711" text-anchor="middle" class="ct">325</text>
<line x1="1397.5" y1="696" x2="1397.5" y2="698.5" stroke="#000" stroke-width="1"/>
<line x1="1405.5" y1="696" x2="1405.5" y2="698.5" stroke="#000" stroke-width="1"/>
<line x1="1413.5" y1="696" x2="1413.5" y2="698.5" stroke="#000" stroke-width="1"/>
<line x1="1421.5" y1="696" x2="1421.5" y2="698.5" stroke="#000" stroke-width="1"/>
<line x1="1430.5" y1="696" x2="1430.5" y2="700.5" stroke="#000" stroke-width="1"/>
<text x="1428.0" y="711" text-anchor="middle" class="ct">330</text>
<line x1="1438.5" y1="696" x2="1438.5" y2="698.5" stroke="#000" stroke-width="1"/>
<line x1="1446.5" y1="696" x2="1446.5" y2="698.5" stroke="#000" stroke-width="1"/>
<line x1="1454.5" y1="696" x2="1454.5" y2="698.5" stroke="#000" stroke-width="1"/>
<line x1="1462.5" y1="696" x2="1462.5" y2="698.5" stroke="#000" stroke-width="1"/>
<line x1="1471.5" y1="696" x2="1471.5" y2="700.5" stroke="#000" stroke-width="1"/>
<text x="1469.0" y="711" text-anchor="middle" class="ct">335</text>
<line x1="1479.5" y1="696" x2="1479.5" y2="698.5" stroke="#000" stroke-width="1"/>
<line x1="1487.5" y1="696" x2="1487.5" y2="698.5" stroke="#000" stroke-width="1"/>
<line x1="1495.5" y1="696" x2="1495.5" y2="698.5" stroke="#000" stroke-width="1"/>
<line x1="1504.5" y1="696" x2="1504.5" y2="698.5" stroke="#000" stroke-width="1"/>
<line x1="1512.5" y1="696" x2="1512.5" y2="700.5" stroke="#000" stroke-width="1"/>
<text x="1510.0" y="711" text-anchor="middle" class="ct">340</text>
<line x1="1520.5" y1="696" x2="1520.5" y2="698.5" stroke="#000" stroke-width="1"/>
<line x1="1528.5" y1="696" x2="1528.5" y2="698.5" stroke="#000" stroke-width="1"/>
<line x1="1536.5" y1="696" x2="1536.5" y2="698.5" stroke="#000" stroke-width="1"/>
<line x1="1545.5" y1="696" x2="1545.5" y2="698.5" stroke="#000" stroke-width="1"/>
<line x1="1553.5" y1="696" x2="1553.5" y2="700.5" stroke="#000" stroke-width="1"/>
<text x="1551.0" y="711" text-anchor="middle" class="ct">345</text>
<line x1="1561.5" y1="696" x2="1561.5" y2="698.5" stroke="#000" stroke-width="1"/>
<line x1="1569.5" y1="696" x2="1569.5" y2="698.5" stroke="#000" stroke-width="1"/>
<line x1="1578.5" y1="696" x2="1578.5" y2="698.5" stroke="#000" stroke-width="1"/>
<line x1="1586.5" y1="696" x2="1586.5" y2="698.5" stroke="#000" stroke-width="1"/>
<line x1="1594.5" y1="696" x2="1594.5" y2="700.5" stroke="#000" stroke-width="1"/>
<text x="1592.0" y="711" text-anchor="middle" class="ct">350</text>
<text x="1060" y="728" text-anchor="middle" class="ct">Wavelength (nm)</text>
<text transform="translate(474,394) rotate(-90)" text-anchor="middle" class="ct">10mm Absorbance</text>
<text x="528" y="104" class="ct" style="fill:#e03030">A03 04 control</text>
<line x1="1060.5" y1="92" x2="1060.5" y2="696" stroke="#000" stroke-width="1"/>
<line x1="525" y1="491.5" x2="1595" y2="491.5" stroke="#000" stroke-width="1"/>
<path d="M525.9,298.7 L533.7,331.3 L541.9,355.1 L550.2,375.7 L558.4,392.9 L566.6,405.2 L574.8,413.2 L583.1,418.1 L591.3,420.9 L599.5,422.2 L607.7,422.2 L616.0,420.6 L624.2,417.2 L632.4,411.9 L640.6,404.5 L648.8,394.8 L657.1,382.6 L665.3,367.7 L673.5,350.1 L681.7,329.7 L690.0,310.0 L698.2,296.4 L706.4,281.2 L714.6,259.3 L722.9,240.2 L731.1,223.7 L739.3,208.3 L747.5,194.1 L755.7,180.8 L764.0,168.5 L772.2,157.2 L780.4,146.4 L788.6,134.2 L796.9,122.7 L805.1,112.9 L813.3,105.1 L821.5,99.5 L829.8,96.2 L838.0,95.1 L846.2,96.1 L854.4,99.0 L862.6,103.6 L870.9,109.8 L879.1,118.5 L887.3,131.0 L895.5,146.8 L903.8,163.3 L912.0,179.9 L920.2,196.4 L928.4,212.8 L936.7,229.7 L944.9,248.9 L953.1,268.9 L961.3,285.9 L969.5,300.5 L977.8,316.1 L986.0,335.3 L994.2,356.8 L1002.4,378.4 L1010.7,397.7 L1018.9,414.7 L1027.1,430.0 L1035.3,444.5 L1043.6,459.0 L1051.8,474.2 L1060.0,490.1 L1068.2,506.3 L1076.4,522.3 L1084.7,538.0 L1092.9,553.2 L1101.1,567.7 L1109.3,581.5 L1117.6,594.4 L1125.8,606.2 L1134.0,617.0 L1142.2,626.6 L1150.5,635.2 L1158.7,642.9 L1166.9,649.7 L1175.1,655.6 L1183.3,660.8 L1191.6,665.3 L1199.8,669.1 L1208.0,672.3 L1216.2,675.0 L1224.5,677.2 L1232.7,679.0 L1240.9,680.5 L1249.1,681.7 L1257.4,682.6 L1265.6,683.4 L1273.8,684.1 L1282.0,684.7 L1300.0,686.3 L1311.7,687.5 L1328.3,688.3 L1348.3,688.3 L1361.7,686.3 L1376.7,687.5 L1393.3,687.2 L1396.7,686.2 L1405.0,687.2 L1413.3,685.3 L1416.7,686.3 L1428.3,686.3 L1431.7,685.3 L1440.0,685.3 L1443.3,686.3 L1466.7,686.3 L1469.2,685.3 L1471.7,686.3 L1478.3,687.5 L1485.0,688.3 L1495.0,689.2 L1501.7,690.3 L1520.0,690.3 L1523.3,689.5 L1531.7,688.7 L1538.3,689.5 L1553.3,689.2 L1563.3,688.0 L1573.3,686.3 L1577.5,685.3 L1580.0,686.2 L1588.3,686.3 L1593.3,687.5" fill="none" stroke="#a51c1c" stroke-width="1.1"/>
</svg>
<div class="a" style="left:1593px;top:715px;width:17px;height:15px;box-sizing:border-box;border:1px solid #c8c8c8;border-radius:3px;background:#fff"></div>
<svg class="a" style="left:1594px;top:717px" width="15" height="11" viewBox="0 0 15 11"><path d="M6,1 L2,5.5 L6,10 L8,10 L5,5.5 L8,1 Z M12,1 L8,5.5 L12,10 L14,10 L11,5.5 L14,1 Z" fill="#3e6e8e"/></svg>

<!-- right panel -->
<div class="lbl" style="left:1619px;top:93px">Sample ID:</div>
<div class="a" style="left:1695px;top:90px;width:146px;height:23px;background:#fff;border-bottom:2px solid #155a9a;box-sizing:border-box"></div>
<div class="a" style="left:1721px;top:92px;width:94px;height:17px;background:#0a74d6"></div>
<div class="t" style="left:1721px;top:94px;font-size:14.5px;line-height:17px;color:#fff">A03 04 control</div>
<div class="t" style="left:1846px;top:92px;font-size:15px;line-height:17px;font-weight:bold">Pedestal</div>

<div class="lbl" style="left:1644px;top:132px">Type:</div>
<div class="a" style="left:1694px;top:129px;width:106px;height:23px;background:#fbb9fb"></div>
<div class="a" style="left:1800px;top:128px;width:18px;height:25px;background:#efefef;border:1px solid #fafafa;box-sizing:border-box"></div>
<svg class="a" style="left:1806px;top:139px" width="7" height="4" viewBox="0 0 7 4"><path d="M0,0 L7,0 L3.5,4 Z" fill="#111"/></svg>
<div class="lbl" style="left:1697px;top:132px">RNA</div>
<div class="a" style="left:1824px;top:130px;width:70px;height:23px;background:#efefef;box-sizing:border-box;border-bottom:1.5px solid #8a8a8a;border-radius:2px"></div>
<div class="lbl" style="left:1826px;top:132px;color:#222">40.00</div>

<div class="lbl" style="left:1641px;top:167px">Conc.</div>
<div class="a" style="left:1694px;top:167px;width:123px;height:21px;background:#fbb9fb;box-sizing:border-box;border-bottom:1.5px solid #8a8a8a"></div>
<div class="t" style="left:1694px;top:168px;width:121px;text-align:right;font-size:14.5px;line-height:17px;font-weight:bold">533.0</div>
<div class="a" style="left:1824px;top:165px;width:70px;height:25px;background:#fdfdfd;box-sizing:border-box;border:1px solid #d8d8d8;border-radius:2px"></div>
<div class="t" style="left:1828px;top:168px;font-size:14.5px;line-height:17px;font-weight:bold">ng/µl</div>
<svg class="a" style="left:1881px;top:174px" width="10" height="6" viewBox="0 0 10 6"><path d="M1,1 L5,5 L9,1" fill="none" stroke="#555" stroke-width="1"/></svg>

<div class="lbl" style="left:1688px;top:201px">A260 (10 mm path)</div>
<div class="vbox" style="top:200px"><div class="vt">13.326</div></div>
<div class="lbl" style="left:1688px;top:231px">A280 (10 mm path)</div>
<div class="vbox" style="top:230px"><div class="vt">6.298</div></div>
<div class="lbl" style="left:1753px;top:261px">260 / 280</div>
<div class="vbox" style="top:260px"><div class="vt">2.12</div></div>
<div class="lbl" style="left:1753px;top:291px">260 / 230</div>
<div class="vbox" style="top:290px"><div class="vt">2.19</div></div>

<div class="cb cbon" style="left:1666px;top:327px"></div>
<svg class="a" style="left:1666px;top:327px" width="13" height="13" viewBox="0 0 13 13"><path d="M3.2,6.6 L5.4,8.8 L9.8,4.2" fill="none" stroke="#fff" stroke-width="1"/></svg>
<div class="lbl" style="left:1685px;top:325px">Baseline correction</div>
<div class="a" style="left:1824px;top:322px;width:42px;height:23px;background:#fff;box-sizing:border-box;border-bottom:1px solid #a0a0a0"></div>
<div class="lbl" style="left:1833px;top:325px">340</div>
<div class="lbl" style="left:1872px;top:325px">nm</div>

<!-- status box -->
<div class="a" style="left:460px;top:739px;width:1128px;height:23px;box-sizing:border-box;border-top:1px solid #a0a0a0;border-left:1px solid #a0a0a0;border-bottom:1px solid #fff;background:#ebebf5"></div>
<div class="lbl" style="left:464px;top:741px">285nm 4.476Abs</div>
<div class="a" style="left:1594px;top:739px;width:18px;height:23px;box-sizing:border-box;border:1px solid #c8c8c8;border-radius:3px;background:#fff"></div>
<svg class="a" style="left:1596px;top:742px" width="14" height="17" viewBox="0 0 14 17"><path d="M1,2 L7,6 L13,2 L13,5 L7,9 L1,5 Z M1,8 L7,12 L13,8 L13,11 L7,15 L1,11 Z" fill="#3e6e8e"/></svg>

<!-- table -->
<div class="a" style="left:460px;top:773px;width:1453px;height:228px;box-sizing:border-box;border:2px solid #000;border-right:1.5px solid #000;border-bottom:1.5px solid #000;background:#ededf7"></div>
<div class="a" style="left:1895px;top:775px;width:17px;height:224px;background:#f0f0f0"></div>
<div class="a" style="left:1903px;top:868px;width:2px;height:115px;background:#8a8a8a;border-radius:1px"></div>
<div class="thead" style="left:462px;top:775px;width:1133px;height:23px"></div>
<div class="th" style="left:470px;top:779px">#</div>
<div class="th" style="left:510px;top:779px">Sample ID</div>
<div style="position:absolute;left:502px;top:776px;width:1px;height:22px;background:#e3e3e3"></div>
<div class="th" style="left:627px;top:779px">User name</div>
<div style="position:absolute;left:619px;top:776px;width:1px;height:22px;background:#e3e3e3"></div>
<div class="th" style="left:732px;top:779px">Date and Time</div>
<div style="position:absolute;left:724px;top:776px;width:1px;height:22px;background:#e3e3e3"></div>
<div class="th" style="left:860px;top:779px">Nucleic Acid</div>
<div style="position:absolute;left:852px;top:776px;width:1px;height:22px;background:#e3e3e3"></div>
<div class="th" style="left:972px;top:779px">Unit</div>
<div style="position:absolute;left:964px;top:776px;width:1px;height:22px;background:#e3e3e3"></div>
<div class="th" style="left:1030px;top:779px">A260 (Abs)</div>
<div style="position:absolute;left:1022px;top:776px;width:1px;height:22px;background:#e3e3e3"></div>
<div class="th" style="left:1135px;top:779px">A280 (Abs)</div>
<div style="position:absolute;left:1127px;top:776px;width:1px;height:22px;background:#e3e3e3"></div>
<div class="th" style="left:1240px;top:779px">260/280</div>
<div style="position:absolute;left:1232px;top:776px;width:1px;height:22px;background:#e3e3e3"></div>
<div class="th" style="left:1325px;top:779px">260/230</div>
<div style="position:absolute;left:1317px;top:776px;width:1px;height:22px;background:#e3e3e3"></div>
<div class="th" style="left:1410px;top:779px">Sample Type</div>
<div style="position:absolute;left:1402px;top:776px;width:1px;height:22px;background:#e3e3e3"></div>
<div class="th" style="left:1528px;top:779px">Factor</div>
<div style="position:absolute;left:1520px;top:776px;width:1px;height:22px;background:#e3e3e3"></div>
<div style="position:absolute;left:462px;top:798px;width:1133px;height:168px;background:#fff"></div>
<div style="position:absolute;left:502px;top:798px;width:1px;height:168px;background:#a0a0a0"></div>
<div style="position:absolute;left:619px;top:798px;width:1px;height:168px;background:#a0a0a0"></div>
<div style="position:absolute;left:724px;top:798px;width:1px;height:168px;background:#a0a0a0"></div>
<div style="position:absolute;left:852px;top:798px;width:1px;height:168px;background:#a0a0a0"></div>
<div style="position:absolute;left:964px;top:798px;width:1px;height:168px;background:#a0a0a0"></div>
<div style="position:absolute;left:1022px;top:798px;width:1px;height:168px;background:#a0a0a0"></div>
<div style="position:absolute;left:1127px;top:798px;width:1px;height:168px;background:#a0a0a0"></div>
<div style="position:absolute;left:1232px;top:798px;width:1px;height:168px;background:#a0a0a0"></div>
<div style="position:absolute;left:1317px;top:798px;width:1px;height:168px;background:#a0a0a0"></div>
<div style="position:absolute;left:1402px;top:798px;width:1px;height:168px;background:#a0a0a0"></div>
<div style="position:absolute;left:1520px;top:798px;width:1px;height:168px;background:#a0a0a0"></div>
<div style="position:absolute;left:1595px;top:798px;width:1px;height:168px;background:#a0a0a0"></div>
<div style="position:absolute;left:462px;top:798px;width:1134px;height:1px;background:#a0a0a0"></div>
<div style="position:absolute;left:462px;top:819px;width:1134px;height:1px;background:#a0a0a0"></div>
<div style="position:absolute;left:462px;top:840px;width:1134px;height:1px;background:#a0a0a0"></div>
<div style="position:absolute;left:462px;top:861px;width:1134px;height:1px;background:#a0a0a0"></div>
<div style="position:absolute;left:462px;top:882px;width:1134px;height:1px;background:#a0a0a0"></div>
<div style="position:absolute;left:462px;top:903px;width:1134px;height:1px;background:#a0a0a0"></div>
<div style="position:absolute;left:462px;top:924px;width:1134px;height:1px;background:#a0a0a0"></div>
<div style="position:absolute;left:462px;top:945px;width:1134px;height:1px;background:#a0a0a0"></div>
<div style="position:absolute;left:462px;top:966px;width:1133px;height:21px;background:#0a74d6"></div>
<div style="position:absolute;left:502px;top:966px;width:1px;height:21px;background:#5a9ad8"></div>
<div style="position:absolute;left:619px;top:966px;width:1px;height:21px;background:#5a9ad8"></div>
<div style="position:absolute;left:724px;top:966px;width:1px;height:21px;background:#5a9ad8"></div>
<div style="position:absolute;left:852px;top:966px;width:1px;height:21px;background:#5a9ad8"></div>
<div style="position:absolute;left:964px;top:966px;width:1px;height:21px;background:#5a9ad8"></div>
<div style="position:absolute;left:1022px;top:966px;width:1px;height:21px;background:#5a9ad8"></div>
<div style="position:absolute;left:1127px;top:966px;width:1px;height:21px;background:#5a9ad8"></div>
<div style="position:absolute;left:1232px;top:966px;width:1px;height:21px;background:#5a9ad8"></div>
<div style="position:absolute;left:1317px;top:966px;width:1px;height:21px;background:#5a9ad8"></div>
<div style="position:absolute;left:1402px;top:966px;width:1px;height:21px;background:#5a9ad8"></div>
<div style="position:absolute;left:1520px;top:966px;width:1px;height:21px;background:#5a9ad8"></div>
<div style="position:absolute;left:1595px;top:966px;width:1px;height:21px;background:#5a9ad8"></div>
<div class="td" style="left:466px;top:801px">8</div>
<div class="td" style="left:506px;top:801px">A06</div>
<div class="td" style="left:623px;top:801px">TP-SSV</div>
<div class="td" style="left:728px;top:801px">01.10.2024 09:30</div>
<div class="td" style="left:856px;top:801px">144.5</div>
<div class="td" style="left:968px;top:801px">ng/µl</div>
<div class="td" style="left:1026px;top:801px">3.613</div>
<div class="td" style="left:1131px;top:801px">1.788</div>
<div class="td" style="left:1236px;top:801px">2.02</div>
<div class="td" style="left:1321px;top:801px">1.01</div>
<div class="td" style="left:1406px;top:801px">RNA</div>
<div class="td" style="left:1524px;top:801px">40.00</div>
<div class="td" style="left:466px;top:822px">9</div>
<div class="td" style="left:506px;top:822px">A05 06 control</div>
<div class="td" style="left:623px;top:822px">TP-SSV</div>
<div class="td" style="left:728px;top:822px">01.10.2024 09:33</div>
<div class="td" style="left:856px;top:822px">496.5</div>
<div class="td" style="left:968px;top:822px">ng/µl</div>
<div class="td" style="left:1026px;top:822px">12.412</div>
<div class="td" style="left:1131px;top:822px">5.806</div>
<div class="td" style="left:1236px;top:822px">2.14</div>
<div class="td" style="left:1321px;top:822px">2.16</div>
<div class="td" style="left:1406px;top:822px">RNA</div>
<div class="td" style="left:1524px;top:822px">40.00</div>
<div class="td" style="left:466px;top:843px">10</div>
<div class="td" style="left:506px;top:843px">A05</div>
<div class="td" style="left:623px;top:843px">TP-SSV</div>
<div class="td" style="left:728px;top:843px">01.10.2024 09:35</div>
<div class="td" style="left:856px;top:843px">250.2</div>
<div class="td" style="left:968px;top:843px">ng/µl</div>
<div class="td" style="left:1026px;top:843px">6.256</div>
<div class="td" style="left:1131px;top:843px">2.955</div>
<div class="td" style="left:1236px;top:843px">2.12</div>
<div class="td" style="left:1321px;top:843px">1.78</div>
<div class="td" style="left:1406px;top:843px">RNA</div>
<div class="td" style="left:1524px;top:843px">40.00</div>
<div class="td" style="left:466px;top:864px">11</div>
<div class="td" style="left:506px;top:864px">A03 04</div>
<div class="td" style="left:623px;top:864px">TP-SSV</div>
<div class="td" style="left:728px;top:864px">01.10.2024 09:41</div>
<div class="td" style="left:856px;top:864px">0.0</div>
<div class="td" style="left:968px;top:864px">ng/µl</div>
<div class="td" style="left:1026px;top:864px">-0.001</div>
<div class="td" style="left:1131px;top:864px">0.003</div>
<div class="td" style="left:1236px;top:864px">-0.19</div>
<div class="td" style="left:1321px;top:864px">-0.05</div>
<div class="td" style="left:1406px;top:864px">RNA</div>
<div class="td" style="left:1524px;top:864px">40.00</div>
<div class="td" style="left:466px;top:885px">12</div>
<div class="td" style="left:506px;top:885px">A03</div>
<div class="td" style="left:623px;top:885px">TP-SSV</div>
<div class="td" style="left:728px;top:885px">01.10.2024 09:44</div>
<div class="td" style="left:856px;top:885px">9.7</div>
<div class="td" style="left:968px;top:885px">ng/µl</div>
<div class="td" style="left:1026px;top:885px">0.243</div>
<div class="td" style="left:1131px;top:885px">0.122</div>
<div class="td" style="left:1236px;top:885px">1.99</div>
<div class="td" style="left:1321px;top:885px">0.65</div>
<div class="td" style="left:1406px;top:885px">RNA</div>
<div class="td" style="left:1524px;top:885px">40.00</div>
<div class="td" style="left:466px;top:906px">13</div>
<div class="td" style="left:506px;top:906px">A03</div>
<div class="td" style="left:623px;top:906px">TP-SSV</div>
<div class="td" style="left:728px;top:906px">01.10.2024 09:45</div>
<div class="td" style="left:856px;top:906px">10.1</div>
<div class="td" style="left:968px;top:906px">ng/µl</div>
<div class="td" style="left:1026px;top:906px">0.252</div>
<div class="td" style="left:1131px;top:906px">0.136</div>
<div class="td" style="left:1236px;top:906px">1.85</div>
<div class="td" style="left:1321px;top:906px">0.64</div>
<div class="td" style="left:1406px;top:906px">RNA</div>
<div class="td" style="left:1524px;top:906px">40.00</div>
<div class="td" style="left:466px;top:927px">14</div>
<div class="td" style="left:506px;top:927px">A04</div>
<div class="td" style="left:623px;top:927px">TP-SSV</div>
<div class="td" style="left:728px;top:927px">01.10.2024 09:47</div>
<div class="td" style="left:856px;top:927px">24.8</div>
<div class="td" style="left:968px;top:927px">ng/µl</div>
<div class="td" style="left:1026px;top:927px">0.619</div>
<div class="td" style="left:1131px;top:927px">0.410</div>
<div class="td" style="left:1236px;top:927px">1.51</div>
<div class="td" style="left:1321px;top:927px">0.44</div>
<div class="td" style="left:1406px;top:927px">RNA</div>
<div class="td" style="left:1524px;top:927px">40.00</div>
<div class="td" style="left:466px;top:948px">15</div>
<div class="td" style="left:506px;top:948px">A03 04 control</div>
<div class="td" style="left:623px;top:948px">TP-SSV</div>
<div class="td" style="left:728px;top:948px">01.10.2024 09:49</div>
<div class="td" style="left:856px;top:948px">-0.1</div>
<div class="td" style="left:968px;top:948px">ng/µl</div>
<div class="td" style="left:1026px;top:948px">-0.004</div>
<div class="td" style="left:1131px;top:948px">-0.005</div>
<div class="td" style="left:1236px;top:948px">0.81</div>
<div class="td" style="left:1321px;top:948px">0.57</div>
<div class="td" style="left:1406px;top:948px">RNA</div>
<div class="td" style="left:1524px;top:948px">40.00</div>
<div class="td tds" style="left:466px;top:969px">16</div>
<div class="td tds" style="left:506px;top:969px">A03 04 control</div>
<div class="td tds" style="left:623px;top:969px">TP-SSV</div>
<div class="td tds" style="left:728px;top:969px">01.10.2024 09:51</div>
<div class="td tds" style="left:856px;top:969px">533.0</div>
<div class="td tds" style="left:968px;top:969px">ng/µl</div>
<div class="td tds" style="left:1026px;top:969px">13.326</div>
<div class="td tds" style="left:1131px;top:969px">6.298</div>
<div class="td tds" style="left:1236px;top:969px">2.12</div>
<div class="td tds" style="left:1321px;top:969px">2.19</div>
<div class="td tds" style="left:1406px;top:969px">RNA</div>
<div class="td tds" style="left:1524px;top:969px">40.00</div>

<!-- status bar -->
<div class="a" style="left:0;top:1006px;width:1916px;height:24px;background:#f0f0f0;border-top:1px solid #d4d4d4;border-bottom:1px solid #c8c8c8;box-sizing:border-box"></div>
<svg class="a" style="left:48px;top:1010px" width="16" height="16" viewBox="0 0 16 16"><defs><linearGradient id="sh" x1="0" y1="0" x2="0" y2="1"><stop offset="0" stop-color="#2a8a4a"/><stop offset="1" stop-color="#7ac890"/></linearGradient></defs><path d="M8,0.5 L15,3 L14.5,9 Q13,14 8,15.5 Q3,14 1.5,9 L1,3 Z" fill="url(#sh)" stroke="#707a70" stroke-width="1"/><path d="M4.5,8 L7,10.5 L11.5,5.5" fill="none" stroke="#e8ffe8" stroke-width="1.8"/></svg>
<div class="t" style="left:1861px;top:1013px;font-size:10.5px">TP-SSV</div>

<!-- taskbar -->
<div class="a" style="left:0;top:1030px;width:1916px;height:47px;background:linear-gradient(to right,#dbe6f4,#e4ecf7 50%,#dde7f4)"></div>

<!-- weather -->
<svg class="a" style="left:14px;top:1034px" width="30" height="32" viewBox="0 0 30 32">
 <defs><linearGradient id="cl" x1="0" y1="0" x2="0.3" y2="1"><stop offset="0" stop-color="#b4c8e8"/><stop offset="1" stop-color="#eef4fc"/></linearGradient>
 <linearGradient id="dr" x1="0" y1="0" x2="0.4" y2="1"><stop offset="0" stop-color="#4aa0f8"/><stop offset="1" stop-color="#1060e8"/></linearGradient></defs>
 <path d="M3.5,23 Q0.5,22 1,17.5 Q2,13 7,13.5 Q8.5,7.5 14.5,8 Q20.5,8.5 21.5,13.5 Q25.5,14 25,19 Q24.5,23 20,23 Z" fill="url(#cl)" stroke="#94acd0" stroke-width="0.6"/>
 <path d="M7.5,18 L12.5,23.5 Q13.5,27 11.5,28.5 Q9,29.5 7.8,27 Z" fill="url(#dr)"/>
 <path d="M16.5,17.5 L22,23.5 Q23,27.5 20.5,29 Q17.5,29.8 16.5,27 Z" fill="url(#dr)"/>
 <circle cx="20" cy="8.3" r="7.8" fill="#cc2a1e"/>
 <text x="20.5" y="12.3" text-anchor="middle" font-family="Liberation Sans" font-size="10.5" fill="#fff">1</text>
</svg>
<div class="t" style="left:47px;top:1040px;font-size:11px;color:#111">14°C</div>
<div class="t" style="left:47px;top:1056px;font-size:11px;color:#555">Rain</div>
<!-- windows logo -->
<div class="a" style="left:723px;top:1042px;width:11px;height:11px;background:#1a8ae0"></div>
<div class="a" style="left:735px;top:1042px;width:11px;height:11px;background:#2a9ae8"></div>
<div class="a" style="left:723px;top:1054px;width:11px;height:11px;background:#1a7ad8"></div>
<div class="a" style="left:735px;top:1054px;width:11px;height:11px;background:#1a88e0"></div>
<!-- search -->
<div class="a" style="left:760px;top:1038px;width:218px;height:30px;box-sizing:border-box;border:1px solid #d0d8e4;border-radius:15px;background:#f4f7fb"></div>
<svg class="a" style="left:770px;top:1044px" width="18" height="18" viewBox="0 0 18 18"><circle cx="7" cy="7" r="5.3" fill="none" stroke="#111" stroke-width="1.6"/><path d="M11,11 L16,16" stroke="#111" stroke-width="1.8"/></svg>
<div class="t" style="left:796px;top:1046px;font-size:13px;color:#333">Search</div>
<svg class="a" style="left:932px;top:1038px" width="45" height="30" viewBox="0 0 45 30">
 <rect x="1" y="6.5" width="5" height="21" rx="0.8" fill="#e0782e"/>
 <rect x="6" y="8.5" width="4.5" height="19" fill="#3a9a2a"/>
 <rect x="10.5" y="10" width="4" height="17.5" fill="#e8b838"/>
 <rect x="14.5" y="9" width="3.5" height="18.5" fill="#2a8a2a"/>
 <rect x="18" y="12" width="3" height="15.5" fill="#c8c838"/>
 <rect x="21" y="14.5" width="5.5" height="13" rx="0.8" fill="#d8702a"/>
 <path d="M2.5,9 h3 M2.5,12 h3 M2.5,15 h3 M2.5,18 h3 M2.5,21 h3 M2.5,24 h3" stroke="#f8b070" stroke-width="0.8"/>
 <path d="M7.5,11 v14 M12,13 v12" stroke="#b8e070" stroke-width="0.8"/>
 <path d="M18,2 L24.5,7.5 L17.5,10 Z" fill="#3a4a4a"/>
 <path d="M24.5,8 L30,11.5 L24,15.5 Z" fill="#2a9a1a"/>
 <path d="M30.5,11.5 L36,13 L31,19 Z" fill="#e8702a"/>
 <path d="M36.5,13 L42.5,14 L38,21.5 Z" fill="#f0c030"/>
 <path d="M18,2 Q30,9 43,14.5" fill="none" stroke="#444" stroke-width="0.5"/>
</svg>
<!-- task view -->
<div class="a" style="left:997px;top:1042px;width:17px;height:15px;background:linear-gradient(135deg,#fdfdfd,#e4e4e4);border-radius:1px"></div>
<div class="a" style="left:991px;top:1048px;width:18px;height:16px;background:#262626;border-radius:1px"></div>
<div class="a" style="left:997px;top:1048px;width:12px;height:9px;background:linear-gradient(135deg,#d8d8d8,#9a9a9a)"></div>
<!-- edge -->
<svg class="a" style="left:1079px;top:1041px" width="25" height="25" viewBox="0 0 25 25">
 <defs>
  <linearGradient id="eg1" x1="0" y1="0" x2="1" y2="0.3"><stop offset="0" stop-color="#38b8f0"/><stop offset="0.5" stop-color="#28c8c8"/><stop offset="1" stop-color="#5ae070"/></linearGradient>
  <linearGradient id="eg2" x1="0" y1="0" x2="0.6" y2="1"><stop offset="0" stop-color="#1a8ae4"/><stop offset="1" stop-color="#1654b0"/></linearGradient>
 </defs>
 <path d="M1.5,12 Q1.5,1 12.5,1 Q24,1 24,11.5 Q24,18 17.5,18.5 Q13,18.5 13,14.5 Q13,10 8.5,10 Q3,10 1.5,12 Z" fill="url(#eg1)"/>
 <path d="M1.5,12 Q3,10 8.5,10 Q13,10 13,14.5 Q13,18.5 17.5,18.5 Q21,18.5 22.5,16.5 Q20,24 12,24 Q1.5,23.5 1.5,12 Z" fill="url(#eg2)"/>
 <path d="M9.5,11.5 Q13,9 14.5,13 Q14,17 18,18.5 Q12,19 10,16 Q8.8,13.5 9.5,11.5 Z" fill="#e0f0fa"/>
</svg>
<!-- app icon highlighted -->
<div class="a" style="left:1116px;top:1034px;width:38px;height:38px;border-radius:5px;background:#f2f5fb"></div>
<div class="a" style="left:1123px;top:1041px;width:24px;height:24px;background:linear-gradient(135deg,#7a9ad8,#3a5aa8);box-shadow:0 0 0 0.5px #456"></div>
<svg class="a" style="left:1123px;top:1041px" width="24" height="24" viewBox="0 0 24 24">
 <path d="M2,1.5 L22,1.5 Q23,5 20,8 L14,9.5 L10,9.5 L4,8 Q1,5 2,1.5 Z" fill="#050508"/>
 <path d="M2,22.5 L22,22.5 Q23,19 20,16 L14,14.5 L10,14.5 L4,16 Q1,19 2,22.5 Z" fill="#050508"/>
 <path d="M7,9 L17,9 L15,12 L17,15 L7,15 L9,12 Z" fill="#3a3a9a"/>
 <ellipse cx="12" cy="12" rx="2" ry="1" fill="#8ab0e8"/>
</svg>
<div class="a" style="left:1128px;top:1068px;width:15px;height:3px;border-radius:2px;background:#0a62c9"></div>
<!-- paint icon -->
<svg class="a" style="left:1167px;top:1041px" width="25" height="25" viewBox="0 0 25 25">
 <path d="M12,1 Q23,1 23,10 Q23,14 19,14 Q16,14 17,18 Q17,24 11,24 Q1,23 1,12 Q1,1 12,1 Z" fill="#3aaae6"/>
 <circle cx="6" cy="11" r="2.2" fill="#e05a3a"/><circle cx="10" cy="6" r="2.2" fill="#3aa040"/><circle cx="16" cy="5" r="2.2" fill="#f0c020"/>
 <path d="M11,13 v4 M9,15 h4" stroke="#fff" stroke-width="1.2"/>
 <path d="M20,8 L23,8 L22,24 L20,24 Z" fill="#b07a40"/>
</svg>
<div class="a" style="left:1176px;top:1069px;width:7px;height:3px;border-radius:2px;background:#777"></div>
<!-- tray -->
<svg class="a" style="left:1685px;top:1048px" width="12" height="8" viewBox="0 0 12 8"><path d="M1,7 L6,2 L11,7" fill="none" stroke="#222" stroke-width="1.2"/></svg>
<div class="t" style="left:1717px;top:1049px;font-size:11.5px;color:#222">ENG</div>
<svg class="a" style="left:1758px;top:1044px" width="18" height="17" viewBox="0 0 18 17"><rect x="1" y="1" width="12" height="10" fill="none" stroke="#222" stroke-width="1.1"/><path d="M5,14 h6 M8,11 v3" stroke="#222" stroke-width="1.1"/><rect x="13" y="1" width="3.5" height="5" rx="1.5" fill="none" stroke="#222" stroke-width="1"/><path d="M14.7,6 v9 h-4" fill="none" stroke="#222" stroke-width="1"/></svg>
<svg class="a" style="left:1782px;top:1045px" width="18" height="15" viewBox="0 0 18 15"><path d="M1,5 h3 l4,-3.5 v12 l-4,-3.5 h-3 Z" fill="none" stroke="#222" stroke-width="1.1"/><path d="M10.5,5 Q12,7.5 10.5,10 M12.5,3 Q15,7.5 12.5,12 M14.5,1 Q18,7.5 14.5,14" fill="none" stroke="#222" stroke-width="1"/></svg>
<div class="t" style="left:1844px;top:1040px;font-size:11.4px;color:#111">09:51</div>
<div class="t" style="left:1815px;top:1056px;font-size:11.4px;color:#111">01.10.2024</div>
<svg class="a" style="left:1881px;top:1045px" width="14" height="17" viewBox="0 0 14 17"><path d="M7,1 Q12,1 12,7 L12,11 L13.5,13 L0.5,13 L2,11 L2,7 Q2,1 7,1 Z" fill="#0a3aa0"/><path d="M5,14 Q7,17 9,14 Z" fill="#0a3aa0"/></svg>

</body></html>
